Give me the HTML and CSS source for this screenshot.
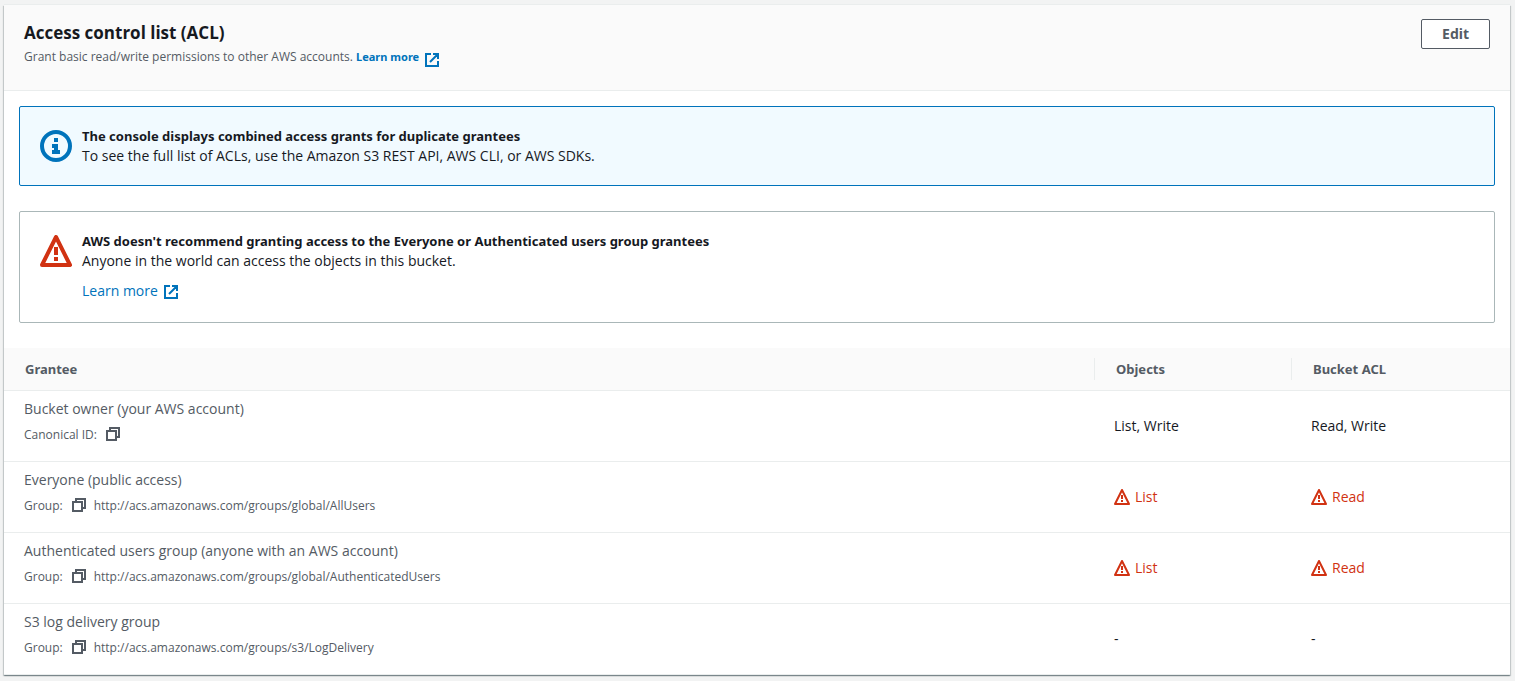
FILE: index.html
```html
<!DOCTYPE html>
<html lang="en">
<head>
<meta charset="utf-8">
<meta name="viewport" content="width=device-width, initial-scale=1">
<title>Access control list (ACL)</title>
<link rel="stylesheet" href="styles.css">
</head>
<body>
<svg class="sprite" aria-hidden="true">
  <symbol id="external" viewBox="0 0 16 16"><path d="M7 2H2v12h12V9M9 2h5v5M6 10l8-8"/></symbol>
  <symbol id="copy" viewBox="0 0 16 16"><path d="M2 5h9v9H2zM5 5V2h9v9h-3"/></symbol>
  <symbol id="warning" viewBox="0 0 16 16"><path stroke-linejoin="round" d="M8 1 15 15H1z"/><path d="M8 6v4M8 11v2"/></symbol>
  <symbol id="warning-large" viewBox="0 0 32 32"><path stroke-linejoin="round" d="M16 2 30 30H2z"/><path d="M16 12v8M16 22v4"/></symbol>
  <symbol id="info" viewBox="0 0 32 32"><circle cx="16" cy="16" r="14"/><path class="solid" d="M14 8h4v4h-4zM12 14h6v6h2v4h-8v-4h2v-2h-2z"/></symbol>
</svg>
<main class="card">
  <header class="card-header">
    <div>
      <h2 class="title">Access control list (ACL)</h2>
      <p class="description">Grant basic read/write permissions to other AWS accounts. <a class="link strong" href="#">Learn more<svg class="icon external"><use href="#external"/></svg></a></p>
    </div>
    <button class="button" type="button">Edit</button>
  </header>
  <div class="alerts">
    <section class="alert info">
      <svg class="icon-large"><use href="#info"/></svg>
      <div>
        <h3 class="alert-title">The console displays combined access grants for duplicate grantees</h3>
        <p class="alert-text">To see the full list of ACLs, use the Amazon S3 REST API, AWS CLI, or AWS SDKs.</p>
      </div>
    </section>
    <section class="alert caution">
      <svg class="icon-large"><use href="#warning-large"/></svg>
      <div>
        <h3 class="alert-title">AWS doesn't recommend granting access to the Everyone or Authenticated users group grantees</h3>
        <p class="alert-text">Anyone in the world can access the objects in this bucket.</p>
        <p class="alert-link"><a class="link" href="#">Learn more<svg class="icon external"><use href="#external"/></svg></a></p>
      </div>
    </section>
  </div>
  <table class="grants">
    <thead>
      <tr><th scope="col"><div class="heading">Grantee</div></th><th class="objects" scope="col"><div class="heading divided">Objects</div></th><th class="bucket" scope="col"><div class="heading divided">Bucket ACL</div></th></tr>
    </thead>
    <tbody>
      <tr>
        <td><div class="name">Bucket owner (your AWS account)</div><div class="detail">Canonical ID:<button class="copy" type="button" aria-label="Copy canonical ID"><svg class="icon"><use href="#copy"/></svg></button></div></td>
        <td>List, Write</td><td>Read, Write</td>
      </tr>
      <tr>
        <td><div class="name">Everyone (public access)</div><div class="detail">Group:<button class="copy" type="button" aria-label="Copy group"><svg class="icon"><use href="#copy"/></svg></button>http://acs.amazonaws.com/groups/global/AllUsers</div></td>
        <td><span class="risk"><svg class="icon"><use href="#warning"/></svg>List</span></td><td><span class="risk"><svg class="icon"><use href="#warning"/></svg>Read</span></td>
      </tr>
      <tr>
        <td><div class="name">Authenticated users group (anyone with an AWS account)</div><div class="detail">Group:<button class="copy" type="button" aria-label="Copy group"><svg class="icon"><use href="#copy"/></svg></button>http://acs.amazonaws.com/groups/global/AuthenticatedUsers</div></td>
        <td><span class="risk"><svg class="icon"><use href="#warning"/></svg>List</span></td><td><span class="risk"><svg class="icon"><use href="#warning"/></svg>Read</span></td>
      </tr>
      <tr>
        <td><div class="name">S3 log delivery group</div><div class="detail">Group:<button class="copy" type="button" aria-label="Copy group"><svg class="icon"><use href="#copy"/></svg></button>http://acs.amazonaws.com/groups/s3/LogDelivery</div></td>
        <td>-</td><td>-</td>
      </tr>
    </tbody>
  </table>
</main>
</body>
</html>
```
FILE: styles.css
```css
* { box-sizing: border-box; }

body {
  margin: 0;
  padding: 5px 5px 6px 4px;
  background: #f2f3f3;
  color: #16191f;
  font: 14px/20px "Open Sans", "Noto Sans", sans-serif;
}

h2, h3, p { margin: 0; }

.sprite { position: absolute; width: 0; height: 0; }

.icon, .icon-large {
  flex: none;
  width: 16px;
  height: 16px;
  fill: none;
  stroke: currentColor;
  stroke-width: 2;
}

.icon-large { width: 32px; height: 32px; stroke-width: 4; }
.solid { fill: currentColor; stroke: none; }

.card {
  background: #fff;
  box-shadow: 0 1px 1px rgba(0, 28, 36, .3), 1px 1px 1px rgba(0, 28, 36, .15), -1px 1px 1px rgba(0, 28, 36, .15), 0 -1px 0 #eaeded;
}

.card-header {
  display: flex;
  justify-content: space-between;
  align-items: flex-start;
  padding: 14px 20px 20px;
  border-bottom: 1px solid #eaeded;
  background: #fafafa;
}

.title { font-size: 17px; line-height: 28px; font-weight: 700; }
.description { height: 23px; font-size: 12px; line-height: 20px; color: #545b64; }

.link { color: #0073bb; text-decoration: none; }
.strong { font-family: "Noto Sans", sans-serif; font-size: 11px; font-weight: 700; }
.external { margin-left: 5px; vertical-align: -4px; }
.strong .external { vertical-align: -7px; }

.button {
  height: 30px;
  padding: 0 20px;
  border: 1px solid #545b64;
  border-radius: 2px;
  background: #fff;
  color: #545b64;
  font: 700 14px/20px "Noto Sans", sans-serif;
}

.alerts { display: grid; gap: 25px; padding: 15px 15px 25px; }

.alert {
  display: flex;
  gap: 10px;
  padding: 19px 20px;
  border: 1px solid #aab7b8;
  border-radius: 2px;
}

.alert.info { border-color: #0073bb; background: #f1faff; }
.icon-large { margin-top: 4px; }
.info .icon-large { color: #0073bb; }
.caution .icon-large { color: #d13212; }
.alert-title { font-family: "Noto Sans", sans-serif; font-size: 13px; font-weight: 700; }
.alert-link { height: 32px; padding-top: 10px; }

.grants { width: 100%; border-collapse: collapse; table-layout: fixed; text-align: left; }
.grants th { padding: 10px 0; border-bottom: 1px solid #eaeded; background: #fafafa; color: #545b64; font-family: "Noto Sans", sans-serif; font-size: 13px; font-weight: 700; }
.objects { width: 197px; }
.bucket { width: 219px; }
.heading { padding: 1px 20px 1px 21px; }
.divided { border-left: 1px solid #eaeded; }
.grants td { padding: 7px 20px; border-bottom: 1px solid #eaeded; }
.name { padding-top: 1px; color: #545b64; }
.detail { display: flex; align-items: center; height: 35px; padding-bottom: 3px; font-size: 12px; color: #545b64; }
.copy { display: flex; margin: 0 7px 2px 8px; padding: 0; border: 0; background: none; color: inherit; }
.risk { display: flex; align-items: center; gap: 5px; color: #d13212; }
```
